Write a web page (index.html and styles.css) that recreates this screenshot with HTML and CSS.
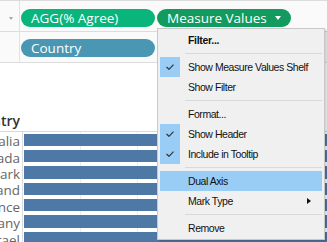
FILE: index.html
```html
<!DOCTYPE html>
<html>
<head>
<meta charset="utf-8">
<link rel="stylesheet" href="styles.css">
</head>
<body>
<div class="page">
  <div class="shelves">
    <div class="shelf shelf-cols">
      <div class="shelf-label"><span class="caret"></span></div>
      <div class="pills">
        <div class="pill pill-agg">AGG(% Agree)</div>
        <div class="pill pill-mv">Measure Values<span class="pill-arrow"></span></div>
      </div>
    </div>
    <div class="shelf shelf-rows">
      <div class="shelf-label"></div>
      <div class="pills">
        <div class="pill pill-dim">Country</div>
      </div>
    </div>
  </div>
  <div class="chart">
    <div class="chart-head">
      <div class="head-label"><span>Country</span></div>
      <div class="head-fill"></div>
    </div>
    <div class="chart-body">
      <div class="labels">
        <div class="lbl"><span>Australia</span></div>
        <div class="lbl"><span>Canada</span></div>
        <div class="lbl"><span>Denmark</span></div>
        <div class="lbl"><span>Finland</span></div>
        <div class="lbl"><span>France</span></div>
        <div class="lbl"><span>Germany</span></div>
        <div class="lbl"><span>Israel</span></div>
      </div>
      <div class="bars">
        <div class="grid g1"></div>
        <div class="grid g2"></div>
        <div class="bar-row"><div class="bar"></div></div>
        <div class="bar-row"><div class="bar"></div></div>
        <div class="bar-row"><div class="bar"></div></div>
        <div class="bar-row"><div class="bar"></div></div>
        <div class="bar-row"><div class="bar"></div></div>
        <div class="bar-row"><div class="bar"></div></div>
        <div class="bar-row"><div class="bar"></div></div>
      </div>
    </div>
  </div>

  <div class="menu">
    <div class="item bold"><span class="chk"></span><span class="txt">Filter...</span></div>
    <div class="sep"></div>
    <div class="item"><span class="chk on"><svg width="8" height="6" viewBox="0 0 8 6"><path d="M0.5 3 L3 5.3 L7.5 0.6" fill="none" stroke="#333" stroke-width="1.2"/></svg></span><span class="txt">Show Measure Values Shelf</span></div>
    <div class="item"><span class="chk"></span><span class="txt">Show Filter</span></div>
    <div class="sep"></div>
    <div class="item"><span class="chk"></span><span class="txt">Format...</span></div>
    <div class="item"><span class="chk on"><svg width="8" height="6" viewBox="0 0 8 6"><path d="M0.5 3 L3 5.3 L7.5 0.6" fill="none" stroke="#333" stroke-width="1.2"/></svg></span><span class="txt">Show Header</span></div>
    <div class="item"><span class="chk on"><svg width="8" height="6" viewBox="0 0 8 6"><path d="M0.5 3 L3 5.3 L7.5 0.6" fill="none" stroke="#333" stroke-width="1.2"/></svg></span><span class="txt">Include in Tooltip</span></div>
    <div class="sep"></div>
    <div class="item hl"><span class="chk"></span><span class="txt">Dual Axis</span></div>
    <div class="item"><span class="chk"></span><span class="txt">Mark Type</span><span class="sub"></span></div>
    <div class="sep"></div>
    <div class="item"><span class="chk"></span><span class="txt">Remove</span></div>
  </div>
</div>
</body>
</html>
```

FILE: styles.css
```css
html, body {
  margin: 0;
  padding: 0;
  background: #ffffff;
}
.page {
  position: relative;
  width: 327px;
  height: 242px;
  overflow: hidden;
  background: #ffffff;
}
.shelves {
  background: #fafafa;
  border-top: 1px solid #dcdcdc;
}
.shelf {
  display: flex;
  height: 30px;
  border-bottom: 1px solid #dcdcdc;
}
.shelf-label {
  width: 19px;
  border-right: 1px solid #e2e2e2;
  position: relative;
}
.caret {
  position: absolute;
  left: 9px;
  top: 16px;
  width: 0;
  height: 0;
  border-left: 2.5px solid transparent;
  border-right: 2.5px solid transparent;
  border-top: 3px solid #a8a8a8;
}
.pills {
  display: flex;
  gap: 2px;
  padding-left: 1px;
  padding-top: 8px;
}
.shelf-rows .pills {
  padding-top: 7px;
}
.pill {
  position: relative;
  box-sizing: border-box;
  width: 134px;
  height: 18px;
  border-radius: 9px;
  padding-left: 10px;
  color: #ffffff;
  font-family: "Open Sans", "Noto Sans", sans-serif;
  font-size: 13.5px;
  line-height: 18px;
  white-space: nowrap;
}
.pill-agg { background: #09b57b; }
.pill-mv { background: #129a5f; }
.pill-dim { background: #4a97b3; }
.pill-arrow {
  position: absolute;
  left: 118px;
  top: 7px;
  width: 0;
  height: 0;
  border-left: 3px solid transparent;
  border-right: 3px solid transparent;
  border-top: 4px solid #ffffff;
}

.chart {
  font-family: "Open Sans", "Noto Sans", sans-serif;
}
.chart-head {
  display: flex;
  height: 68px;
  border-bottom: 1px solid #d9d9d9;
}
.head-label {
  width: 20px;
  display: flex;
  justify-content: flex-end;
  align-items: flex-end;
  overflow: hidden;
  color: #333333;
  font-size: 14px;
  font-weight: 600;
  line-height: 18px;
  padding-bottom: 1px;
  white-space: nowrap;
}
.head-fill { flex: 1; }
.chart-body {
  display: flex;
}
.labels {
  width: 22px;
  border-right: 1px solid #dcdcdc;
  padding-top: 1px;
}
.lbl {
  width: 20px;
  height: 16.4px;
  display: flex;
  justify-content: flex-end;
  align-items: center;
  overflow: hidden;
  color: #666666;
  font-size: 13.5px;
  white-space: nowrap;
}
.bars {
  position: relative;
  flex: 1;
  padding-top: 1px;
  padding-left: 1px;
}
.grid {
  position: absolute;
  top: 0;
  bottom: 0;
  width: 1px;
  background: #eeeeee;
}
.g1 { left: 57px; }
.g2 { left: 114px; }
.bar-row {
  position: relative;
  height: 16.4px;
  padding-top: 0.5px;
  box-sizing: border-box;
}
.bar {
  height: 12.4px;
  background: #4e79a7;
}

.menu {
  position: absolute;
  left: 157px;
  top: 28px;
  width: 166px;
  padding: 1px 0;
  background: #f0f0f0;
  border: 1px solid #c8c8c8;
  box-shadow: 2px 2px 2px rgba(0, 0, 0, 0.18);
  font-family: "Liberation Sans", "Arial", sans-serif;
  font-size: 10.5px;
  letter-spacing: -0.45px;
  color: #111111;
}
.item {
  display: flex;
  align-items: center;
  height: 20px;
  margin: 0 2px;
  position: relative;
}
.item.hl {
  background: #99cdf6;
}
.item.bold .txt {
  font-weight: bold;
  letter-spacing: -0.3px;
}
.chk {
  flex: 0 0 20px;
  width: 20px;
  height: 20px;
  display: flex;
  align-items: center;
  justify-content: center;
}
.chk.on {
  background: #99cdf6;
}
.txt {
  margin-left: 8px;
  white-space: nowrap;
}
.sub {
  position: absolute;
  right: 11px;
  top: 7px;
  width: 0;
  height: 0;
  border-top: 3px solid transparent;
  border-bottom: 3px solid transparent;
  border-left: 4px solid #111111;
}
.sep {
  height: 1px;
  margin: 3px 2px 3px 27px;
  background: #d9d9d9;
}
```
